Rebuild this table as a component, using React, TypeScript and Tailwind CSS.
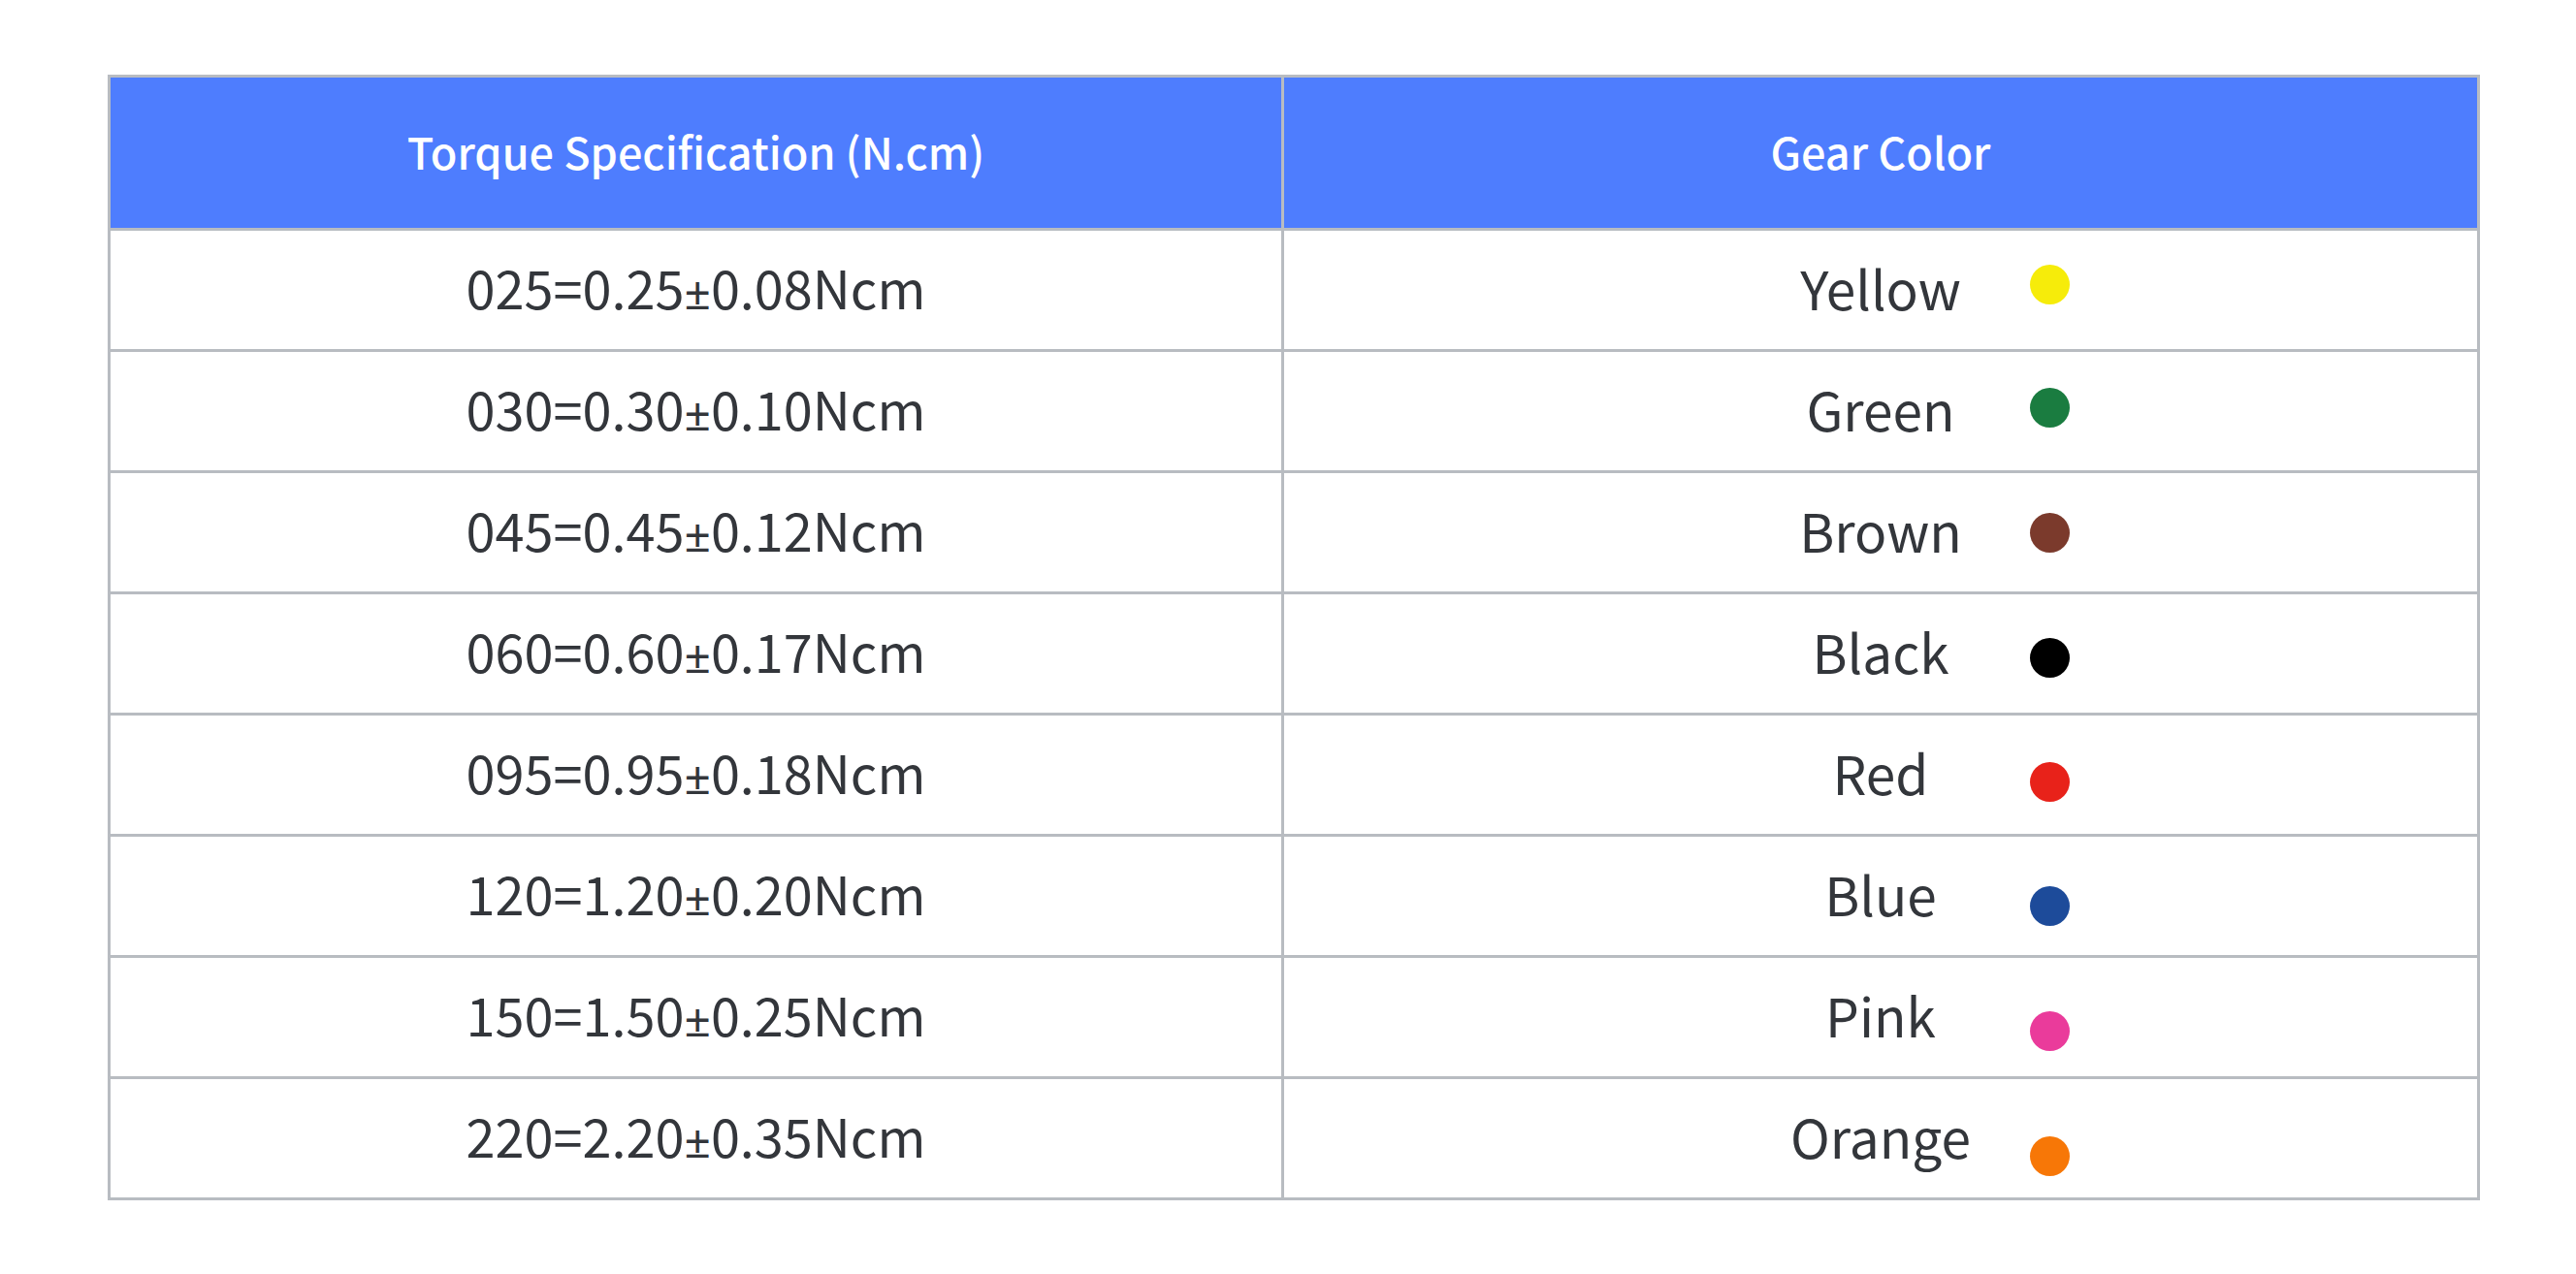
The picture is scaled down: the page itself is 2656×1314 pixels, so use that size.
import React from "react";

const rows = [
  { spec: ["025=0.25", "0.08Ncm"], color: "Yellow", dot: "bg-[#f6ec0a]", top: "top-[35px]" },
  { spec: ["030=0.30", "0.10Ncm"], color: "Green", dot: "bg-[#1a7c40]", top: "top-[37px]" },
  { spec: ["045=0.45", "0.12Ncm"], color: "Brown", dot: "bg-[#7b3a2c]", top: "top-[41px]" },
  { spec: ["060=0.60", "0.17Ncm"], color: "Black", dot: "bg-[#000000]", top: "top-[45px]" },
  { spec: ["095=0.95", "0.18Ncm"], color: "Red", dot: "bg-[#e8221a]", top: "top-[48px]" },
  { spec: ["120=1.20", "0.20Ncm"], color: "Blue", dot: "bg-[#1d4b9a]", top: "top-[51px]" },
  { spec: ["150=1.50", "0.25Ncm"], color: "Pink", dot: "bg-[#ea3b9b]", top: "top-[55px]" },
  { spec: ["220=2.20", "0.35Ncm"], color: "Orange", dot: "bg-[#f77707]", top: "top-[59px]" },
];

const App: React.FC = () => {
  return (
    <div
      className="min-h-screen bg-white pt-[77px] pl-[111px]"
      style={{ fontFamily: '"Noto Sans CJK SC", "Noto Sans", sans-serif' }}
    >
      <table className="w-[2446px] table-fixed border-collapse border-[3px] border-[#b8bcc1]">
        <colgroup>
          <col className="w-[1210px]" />
          <col />
        </colgroup>
        <thead>
          <tr className="h-[158px] bg-[#4e7dfe]">
            <th className="border-[3px] border-[#b8bcc1] p-0 pb-[4px] text-center text-[45px] font-medium text-white">
              Torque Specification (N.cm)
            </th>
            <th className="border-[3px] border-[#b8bcc1] p-0 pb-[4px] text-center text-[45px] font-medium text-white">
              Gear Color
            </th>
          </tr>
        </thead>
        <tbody>
          {rows.map((row) => (
            <tr key={row.color} className="h-[125px]">
              <td className="border-[3px] border-[#b8bcc1] p-0 pb-[6px] text-center text-[54px] text-[#33363b]">
                {row.spec[0]}
                <span className="font-['Noto_Sans',sans-serif] text-[48px]">±</span>
                {row.spec[1]}
              </td>
              <td className="relative border-[3px] border-[#b8bcc1] p-0 pb-[6px] text-center text-[55px] text-[#33363b]">
                {row.color}
                <span
                  className={`absolute left-[calc(50%+154px)] h-[41px] w-[41px] rounded-full ${row.dot} ${row.top}`}
                />
              </td>
            </tr>
          ))}
        </tbody>
      </table>
    </div>
  );
};

export default App;
